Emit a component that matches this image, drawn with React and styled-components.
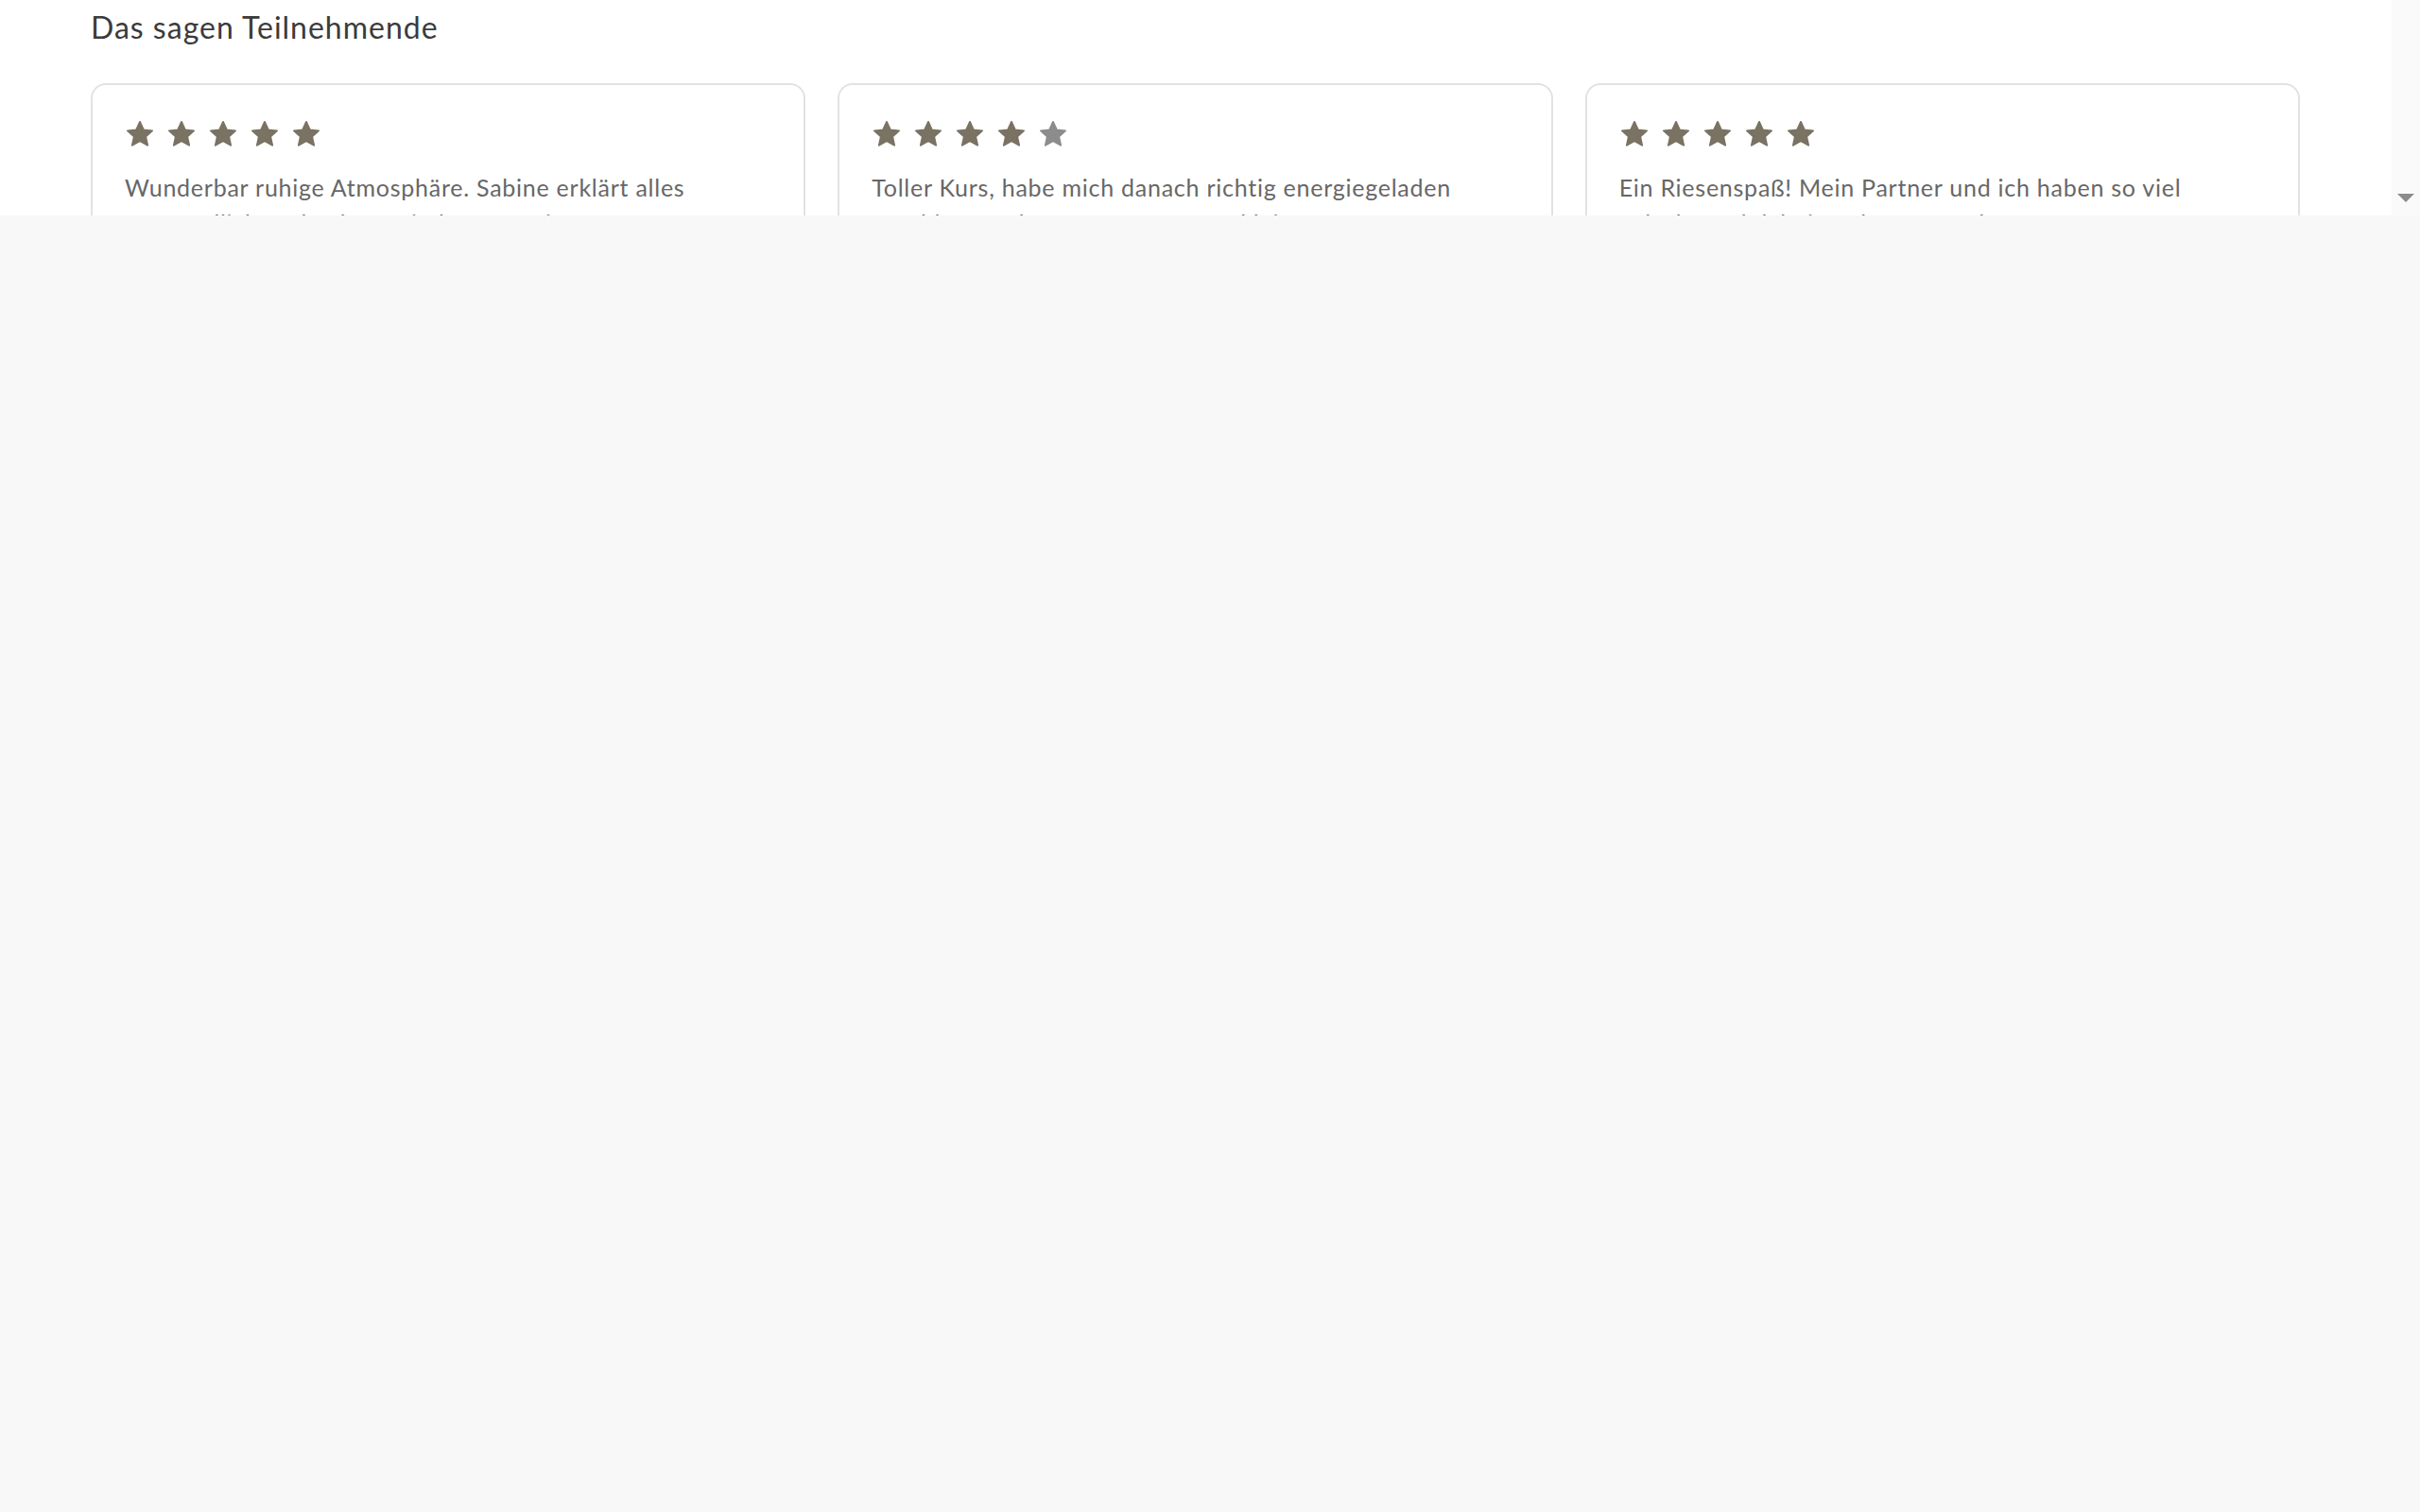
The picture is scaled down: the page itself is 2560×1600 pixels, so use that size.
import React from 'react';
import styled, { createGlobalStyle } from 'styled-components';

const GlobalStyle = createGlobalStyle`
	html, body {
		margin: 0;
		padding: 0;
		background: #f8f8f8;
	}
	* {
		box-sizing: border-box;
	}
`;

const reviews = [
	{
		rating: 5,
		text: 'Wunderbar ruhige Atmosphäre. Sabine erklärt alles verständlich und geht auf jede Frage ein.',
		author: 'Claudia M.',
	},
	{
		rating: 4,
		text: 'Toller Kurs, habe mich danach richtig energiegeladen gefühlt. Nur der Raum war etwas klein.',
		author: 'Thomas R.',
	},
	{
		rating: 5,
		text: 'Ein Riesenspaß! Mein Partner und ich haben so viel gelacht und dabei noch etwas gelernt.',
		author: 'Julia & Ben',
	},
];

const Star = ({ filled }) => (
	<StarIcon viewBox="0 0 24 24" $filled={filled}>
		<polygon points="12,2.2 14.9,8.6 21.8,9.3 16.6,13.9 18.1,20.8 12,17.3 5.9,20.8 7.4,13.9 2.2,9.3 9.1,8.6" />
	</StarIcon>
);

export default function App() {
	return (
		<>
			<GlobalStyle />
			<Frame>
				<Viewport>
					<Section>
						<Title>Das sagen Teilnehmende</Title>
						<Grid>
							{reviews.map((r) => (
								<Card key={r.author}>
									<Stars>
										{[1, 2, 3, 4, 5].map((n) => (
											<Star key={n} filled={n <= r.rating} />
										))}
									</Stars>
									<Quote>{r.text}</Quote>
									<Author>{r.author}</Author>
								</Card>
							))}
						</Grid>
					</Section>
				</Viewport>
				<Scrollbar>
					<ArrowButton />
				</Scrollbar>
			</Frame>
		</>
	);
}

const Frame = styled.div`
	display: flex;
	height: 228px;
	background: #fff;
	overflow: hidden;
`;

const Viewport = styled.div`
	flex: 1;
	overflow: hidden;
`;

const Scrollbar = styled.div`
	width: 30px;
	background: #fafafa;
	display: flex;
	flex-direction: column;
	justify-content: flex-end;
`;

const ArrowButton = styled.div`
	height: 30px;
	display: flex;
	align-items: center;
	justify-content: center;

	&::after {
		content: '';
		border-left: 9px solid transparent;
		border-right: 9px solid transparent;
		border-top: 9px solid #8b8b8b;
		margin-bottom: 8px;
	}
`;

const Section = styled.section`
	padding: 10px 97px 0 96px;
	font-family: Lato, 'Open Sans', sans-serif;
`;

const Title = styled.h2`
	margin: 0;
	font-size: 32px;
	line-height: 38px;
	font-weight: 400;
	letter-spacing: 1px;
	color: #3b3b3b;
`;

const Grid = styled.div`
	display: grid;
	grid-template-columns: repeat(3, 1fr);
	gap: 34px;
	margin-top: 40px;
`;

const Card = styled.div`
	border: 2px solid #e2e2e2;
	border-radius: 16px;
	padding: 36px 34px 34px;
	background: #fff;
`;

const Stars = styled.div`
	display: flex;
	gap: 12px;
`;

const StarIcon = styled.svg`
	width: 32px;
	height: 32px;

	polygon {
		fill: ${(p) => (p.$filled ? '#7a7262' : '#8c8c8c')};
		stroke: ${(p) => (p.$filled ? '#7a7262' : '#8c8c8c')};
		stroke-width: 1.4;
		stroke-linejoin: round;
	}
`;

const Quote = styled.p`
	margin: 21px 0 0;
	max-width: 640px;
	font-size: 25px;
	line-height: 38px;
	letter-spacing: 0.75px;
	color: #676767;
`;

const Author = styled.p`
	margin: 20px 0 0;
	font-size: 22px;
	font-weight: 700;
	color: #3b3b3b;
`;
